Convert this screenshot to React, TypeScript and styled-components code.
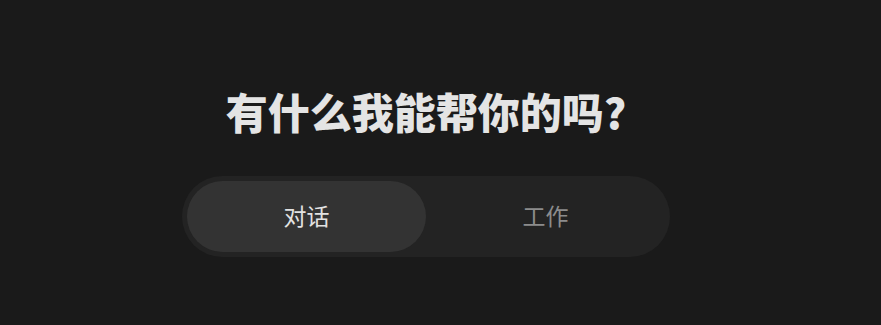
import React, { useState } from "react";
import styled, { createGlobalStyle } from "styled-components";

const GlobalStyle = createGlobalStyle`
  html, body {
    margin: 0;
    padding: 0;
    background: #1a1a1a;
  }
  body {
    font-family: "Noto Sans CJK SC", "Noto Sans", sans-serif;
  }
`;

const Page = styled.div`
  width: 881px;
  height: 325px;
  box-sizing: border-box;
  padding: 81px 29px 0 0;
  display: flex;
  flex-direction: column;
  align-items: center;
  background: #1a1a1a;
`;

const Title = styled.h1`
  margin: 0;
  font-size: 42px;
  line-height: 60px;
  font-weight: 900;
  color: #e4e4e4;
`;

const Switcher = styled.div`
  margin-top: 35px;
  width: 488px;
  height: 81px;
  box-sizing: border-box;
  padding: 5px;
  border-radius: 41px;
  background: #232323;
  display: grid;
  grid-template-columns: 1fr 1fr;
`;

const Tab = styled.button<{ $active: boolean }>`
  border: none;
  border-radius: 36px;
  background: ${(p) => (p.$active ? "#333333" : "transparent")};
  color: ${(p) => (p.$active ? "#e2e2e2" : "#8c8c8c")};
  font-family: inherit;
  font-size: 23px;
  line-height: 1;
  cursor: pointer;
  padding: 0 0 2px;
`;

const tabs = ["对话", "工作"];

const App = () => {
  const [active, setActive] = useState(0);
  return (
    <>
      <GlobalStyle />
      <Page>
        <Title>有什么我能帮你的吗?</Title>
        <Switcher>
          {tabs.map((t, i) => (
            <Tab key={t} $active={active === i} onClick={() => setActive(i)}>
              {t}
            </Tab>
          ))}
        </Switcher>
      </Page>
    </>
  );
};

export default App;
